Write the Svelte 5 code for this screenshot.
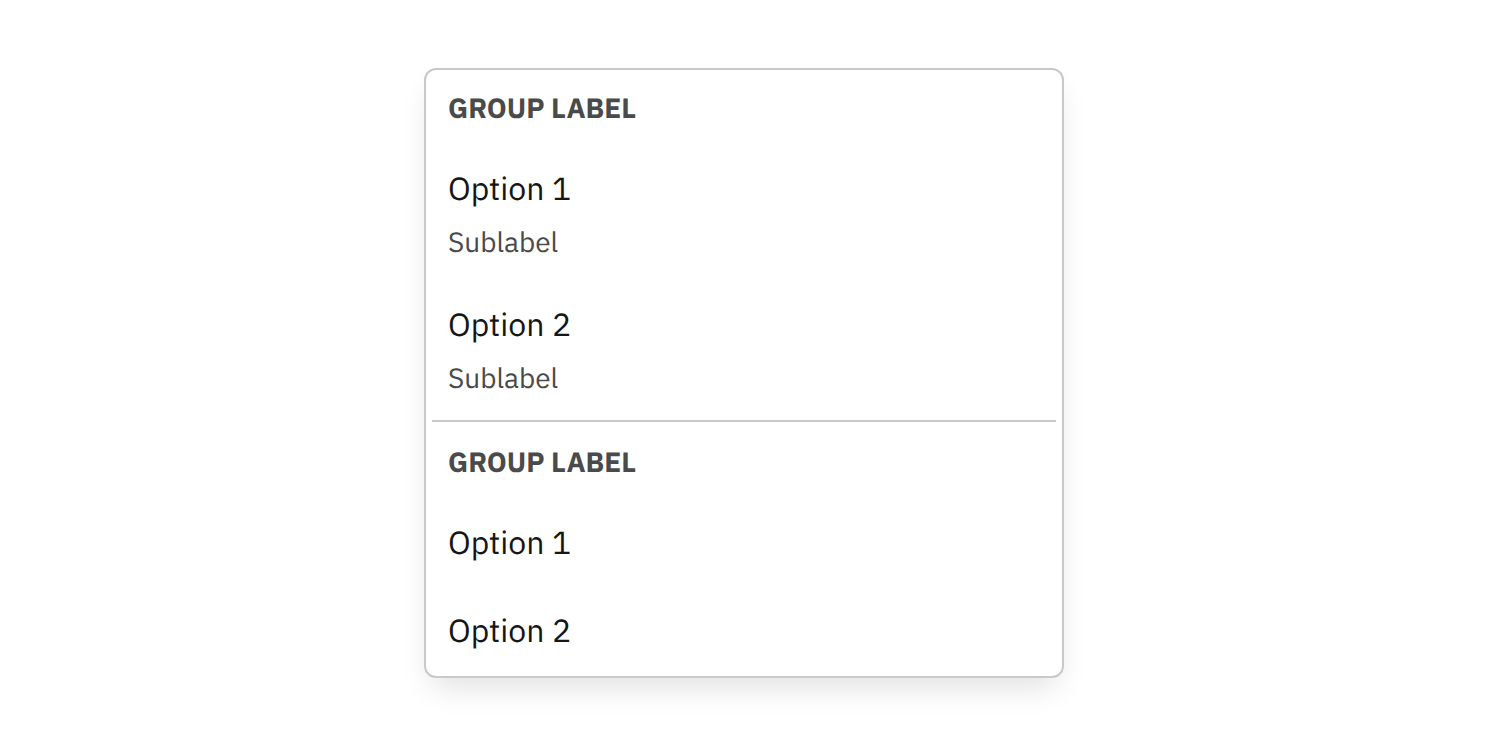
<script>
  const groups = [
    {
      label: 'Group label',
      options: [
        { label: 'Option 1', sublabel: 'Sublabel' },
        { label: 'Option 2', sublabel: 'Sublabel' }
      ]
    },
    {
      label: 'Group label',
      options: [{ label: 'Option 1' }, { label: 'Option 2' }]
    }
  ];
</script>

<main>
  <div class="menu" role="menu">
    {#each groups as group, i}
      <div class="group" role="group" aria-labelledby="group-{i}">
        <h2 id="group-{i}">{group.label}</h2>
        {#each group.options as option}
          <button type="button" role="menuitem">
            <span class="label">{option.label}</span>
            {#if option.sublabel}
              <span class="sublabel">{option.sublabel}</span>
            {/if}
          </button>
        {/each}
      </div>
    {/each}
  </div>
</main>

<style>
  :global(body) {
    margin: 0;
    background: #fff;
  }

  main {
    display: flex;
    justify-content: center;
    padding: 68px 24px 64px;
    font-family: 'IBM Plex Sans', Roboto, sans-serif;
    text-rendering: geometricPrecision;
  }

  .menu {
    box-sizing: border-box;
    width: 100%;
    max-width: 640px;
    padding: 0 6px;
    border: 2px solid #c9c9c9;
    border-radius: 12px;
    background: #fff;
    box-shadow: 0 16px 32px -8px rgba(0, 0, 0, 0.13);
  }

  .group {
    display: flex;
    flex-direction: column;
    padding-bottom: 2px;
  }

  .group:first-child {
    padding-bottom: 4px;
  }

  .group + .group {
    padding-top: 2px;
    border-top: 2px solid #c9c9c9;
  }

  h2 {
    margin: 0;
    padding: 20px 16px 18px;
    color: #4a4a4a;
    font-size: 28px;
    font-weight: 700;
    line-height: 36px;
    text-transform: uppercase;
  }

  button {
    display: flex;
    flex-direction: column;
    gap: 12px;
    padding: 20px 16px;
    border: 0;
    background: transparent;
    font-family: inherit;
    text-align: left;
    text-rendering: inherit;
    cursor: pointer;
  }

  .label {
    color: #161616;
    font-size: 32px;
    line-height: 48px;
  }

  .sublabel {
    color: #4a4a4a;
    font-size: 28px;
    line-height: 36px;
  }
</style>
